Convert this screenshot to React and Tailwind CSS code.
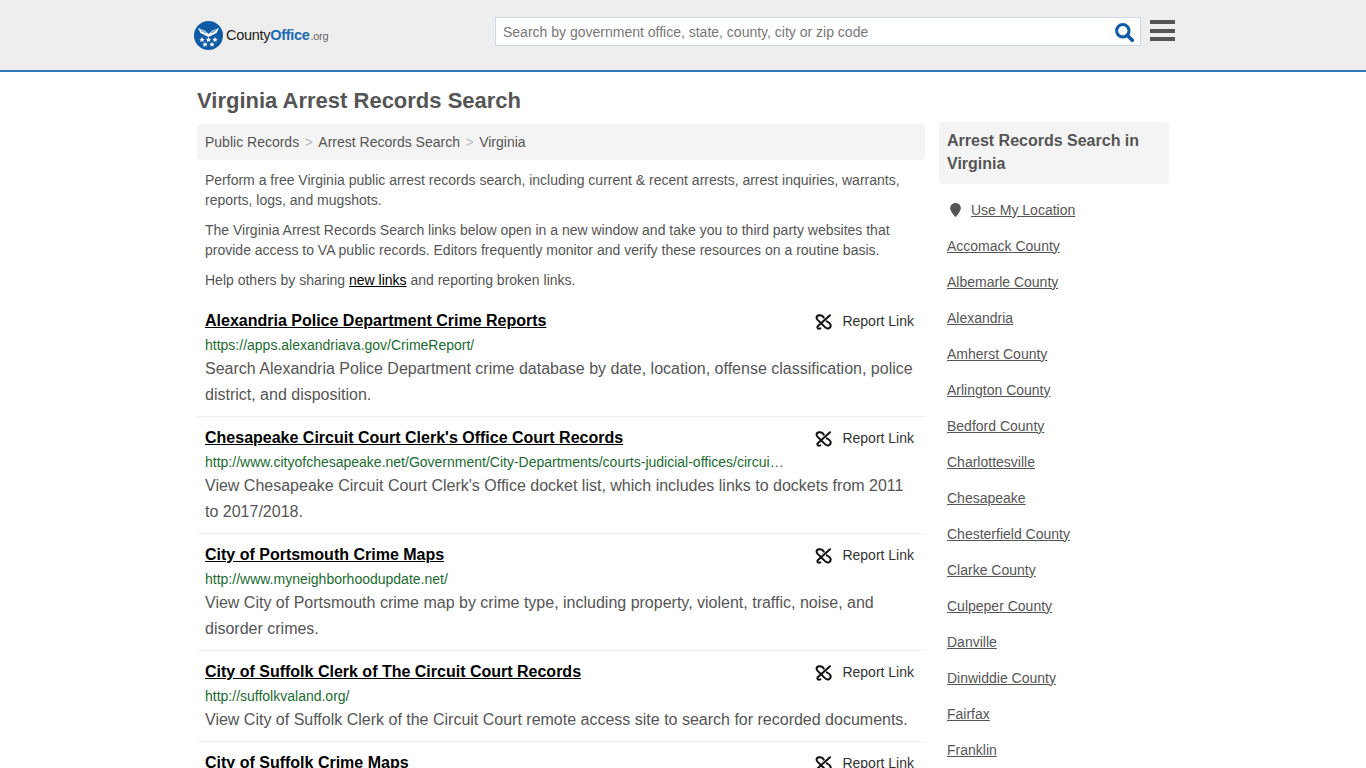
import React from "react";

const results = [
  {
    title: "Alexandria Police Department Crime Reports",
    url: "https://apps.alexandriava.gov/CrimeReport/",
    desc: "Search Alexandria Police Department crime database by date, location, offense classification, police district, and disposition.",
  },
  {
    title: "Chesapeake Circuit Court Clerk's Office Court Records",
    url: "http://www.cityofchesapeake.net/Government/City-Departments/courts-judicial-offices/circuit-court-clerk.htm",
    desc: "View Chesapeake Circuit Court Clerk's Office docket list, which includes links to dockets from 2011 to 2017/2018.",
  },
  {
    title: "City of Portsmouth Crime Maps",
    url: "http://www.myneighborhoodupdate.net/",
    desc: "View City of Portsmouth crime map by crime type, including property, violent, traffic, noise, and disorder crimes.",
  },
  {
    title: "City of Suffolk Clerk of The Circuit Court Records",
    url: "http://suffolkvaland.org/",
    desc: "View City of Suffolk Clerk of the Circuit Court remote access site to search for recorded documents.",
  },
  {
    title: "City of Suffolk Crime Maps",
    url: "http://www.suffolkva.us/",
    desc: "View City of Suffolk crime map by crime type.",
  },
];

const counties = [
  "Accomack County",
  "Albemarle County",
  "Alexandria",
  "Amherst County",
  "Arlington County",
  "Bedford County",
  "Charlottesville",
  "Chesapeake",
  "Chesterfield County",
  "Clarke County",
  "Culpeper County",
  "Danville",
  "Dinwiddie County",
  "Fairfax",
  "Franklin",
];

const Logo = () => (
  <div className="flex items-center gap-[3px]">
    <svg width="29" height="29" viewBox="0 0 29 29">
      <circle cx="14.500" cy="14.500" r="14.500" fill="#0f5ba7" />
      <path d="M4 7 L10.500 9.500 L14.500 13 L18.500 9.500 L25 7 L22.500 12 L17.500 14.500 L14.500 16 L11.500 14.500 L6.500 12 Z" fill="#fff" />
      <path d="M6.500 8.800 L12 12 M22.500 8.800 L17 12" stroke="#0f5ba7" strokeWidth="0.8" />
      <g fill="#fff">
        <path d="M8 16l.8 1.700 1.900.2-1.400 1.200.4 1.800-1.700-1-1.700 1 .4-1.800-1.400-1.200 1.900-.2z" />
        <path d="M14.500 16l.8 1.700 1.900.2-1.400 1.200.4 1.800-1.700-1-1.700 1 .4-1.800-1.400-1.200 1.900-.2z" />
        <path d="M21 16l.8 1.700 1.900.2-1.400 1.200.4 1.800-1.700-1-1.700 1 .4-1.800-1.400-1.200 1.900-.2z" />
        <path d="M11 21l.8 1.600 1.800.2-1.300 1.200.3 1.700-1.600-.9-1.600.9.3-1.700-1.300-1.200 1.800-.2z" />
        <path d="M18 21l.8 1.600 1.800.2-1.300 1.200.3 1.700-1.600-.9-1.600.9.3-1.700-1.300-1.200 1.800-.2z" />
      </g>
    </svg>
    <div className="text-[14.500px] tracking-[-0.3px] text-[#222]">
      County<span className="font-bold text-[#1b6ab5]">Office</span>
      <span className="ml-[1px] text-[11px] text-[#666]">.org</span>
    </div>
  </div>
);

const BrokenLink = () => (
  <svg width="17" height="17" viewBox="0 0 17 17" fill="none" stroke="#111" strokeWidth="2" strokeLinecap="round">
    <path d="M8.800 4.600 C6.800 .8 1.300 1.800 1.600 5 C1.800 6.800 4 8.200 5.500 9.700 L10.500 14.600 C12.800 16.600 16.200 14.800 15.600 11.800 C15.300 10.400 13.600 9.200 11.800 8.400" />
    <path d="M15 2.200 L3 13 C1.600 14.500 3 16.400 5.300 15.300" />
  </svg>
);

const SearchGlyph = () => (
  <svg width="19" height="19" viewBox="0 0 19 19" fill="none" stroke="#0f5ba7">
    <circle cx="7.800" cy="7.800" r="6.200" strokeWidth="3" />
    <path d="M12.300 12.300 L17.300 17.300" strokeWidth="3.600" strokeLinecap="round" />
  </svg>
);

const Result = ({ item, last }) => (
  <div className={`pt-[10px] pb-2 pl-2 pr-[11px] ${last ? "" : "border-b border-[#eee]"}`}>
    <div className="flex items-center justify-between h-[22px]">
      <a className="text-[16px] font-bold text-black underline leading-[22px]">{item.title}</a>
      <div className="flex items-center gap-[10px] text-[14px] text-[#333]">
        <BrokenLink />
        <span>Report Link</span>
      </div>
    </div>
    <div className="mt-[3px] h-[21px] w-[580px] truncate text-[14px] leading-5 text-[#1a6b2f]">{item.url}</div>
    <p className="text-[16px] leading-[26px] text-[#555]">{item.desc}</p>
  </div>
);

export default function App() {
  return (
    <div className="h-screen overflow-hidden bg-white font-['Liberation_Sans',Arial,sans-serif] text-[#555]">
      {/* Header */}
      <header className="h-[72px] bg-[#eee] border-b-2 border-[#337ab7]">
        <div className="w-[972px] mx-auto flex items-start">
          <div className="w-[301px] shrink-0 -ml-[3px] pt-[21px]">
            <Logo />
          </div>
          <div className="mt-[17px] w-[646px] h-[29px] shrink-0 flex items-center justify-between bg-white border border-[#ccd9e6] pl-[7px] pr-[6px] pt-[1px]">
            <span className="text-[14px] text-[#777]">Search by government office, state, county, city or zip code</span>
            <SearchGlyph />
          </div>
          <div className="ml-[9px] mt-5 shrink-0 flex flex-col gap-[4.500px]">
            <div className="w-[25px] h-[4px] bg-[#555]" />
            <div className="w-[25px] h-[4px] bg-[#555]" />
            <div className="w-[25px] h-[4px] bg-[#555]" />
          </div>
        </div>
      </header>

      <div className="w-[972px] mx-auto">
        <h1 className="mt-4 text-[22px] leading-[26px] font-bold text-[#555]">Virginia Arrest Records Search</h1>

        <div className="flex gap-[14px] items-start">
          {/* Main column */}
          <div className="w-[728px] mt-[10px]">
            <div className="h-9 flex items-center gap-[5.500px] px-2 rounded bg-[#f4f4f4] text-[14px] text-[#555]">
              <span>Public Records</span>
              <span className="text-[#bbb]">&gt;</span>
              <span>Arrest Records Search</span>
              <span className="text-[#bbb]">&gt;</span>
              <span>Virginia</span>
            </div>

            <div className="px-2 pt-[10px] text-[14px] leading-5 text-[#555]">
              <p>Perform a free Virginia public arrest records search, including current &amp; recent arrests, arrest inquiries, warrants, reports, logs, and mugshots.</p>
              <p className="mt-[10px]">The Virginia Arrest Records Search links below open in a new window and take you to third party websites that provide access to VA public records. Editors frequently monitor and verify these resources on a routine basis.</p>
              <p className="mt-[10px]">
                Help others by sharing <a className="text-black underline">new links</a> and reporting broken links.
              </p>
            </div>

            <div className="mt-[10px]">
              {results.map((item, i) => (
                <Result key={item.title} item={item} last={i === results.length - 1} />
              ))}
            </div>
          </div>

          {/* Sidebar */}
          <aside className="w-[230px] mt-2">
            <div className="h-[62px] rounded bg-[#f4f4f4] px-2 pt-[7px] text-[16px] leading-[23px] font-bold text-[#555]">
              Arrest Records Search in Virginia
            </div>
            <ul className="mt-[8px] text-[14px] text-[#555]">
              <li className="h-9 flex items-center pl-[11px] gap-[10px]">
                <svg width="11" height="14" viewBox="0 0 11 14">
                  <path d="M5.500 0C2.400 0 .2 2.300.2 5.200.2 8.600 5.500 14 5.500 14s5.300-5.400 5.300-8.800C10.800 2.300 8.600 0 5.500 0z" fill="#555" />
                </svg>
                <a className="underline">Use My Location</a>
              </li>
              {counties.map((name) => (
                <li key={name} className="h-9 flex items-center pl-2">
                  <a className="underline">{name}</a>
                </li>
              ))}
            </ul>
          </aside>
        </div>
      </div>
    </div>
  );
}
